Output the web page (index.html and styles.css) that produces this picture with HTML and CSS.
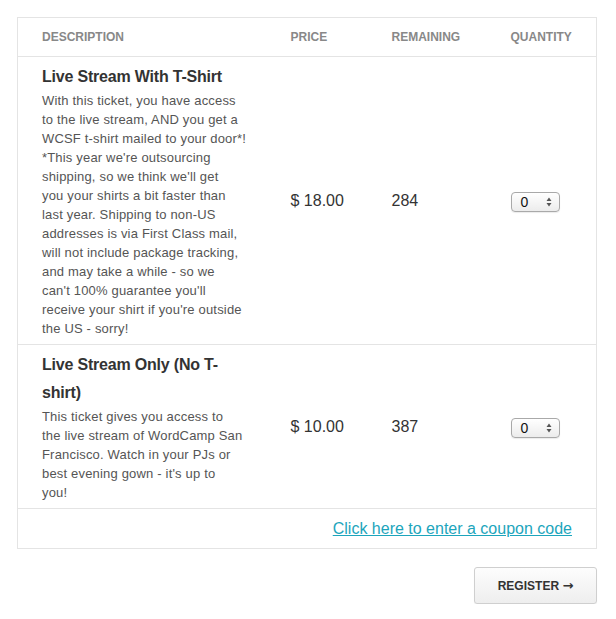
FILE: index.html
```html
<!DOCTYPE html>
<html>
<head>
<meta charset="utf-8">
<link rel="stylesheet" href="styles.css">
</head>
<body>
<div class="wrap">
  <table class="tickets">
    <colgroup>
      <col class="c-desc"><col class="c-price"><col class="c-rem"><col class="c-qty">
    </colgroup>
    <thead>
      <tr>
        <th>Description</th>
        <th>Price</th>
        <th>Remaining</th>
        <th>Quantity</th>
      </tr>
    </thead>
    <tbody>
      <tr>
        <td class="desc">
          <div class="title">Live Stream With T-Shirt</div>
          <div class="text">With this ticket, you have access<br>to the live stream, AND you get a<br>WCSF t-shirt mailed to your door*!<br>*This year we're outsourcing<br>shipping, so we think we'll get<br>you your shirts a bit faster than<br>last year. Shipping to non-US<br>addresses is via First Class mail,<br>will not include package tracking,<br>and may take a while - so we<br>can't 100% guarantee you'll<br>receive your shirt if you're outside<br>the US - sorry!</div>
        </td>
        <td class="num">$ 18.00</td>
        <td class="num">284</td>
        <td class="qty">
          <span class="select"><span class="val">0</span><svg class="arrows" width="6" height="10" viewBox="0 0 6 10"><path d="M3 0.5 L5.5 4 L0.5 4 Z M3 9.5 L5.5 6 L0.5 6 Z" fill="#555"/></svg></span>
        </td>
      </tr>
      <tr>
        <td class="desc">
          <div class="title">Live Stream Only (No T-shirt)</div>
          <div class="text">This ticket gives you access to<br>the live stream of WordCamp San<br>Francisco. Watch in your PJs or<br>best evening gown - it's up to<br>you!</div>
        </td>
        <td class="num">$ 10.00</td>
        <td class="num">387</td>
        <td class="qty">
          <span class="select"><span class="val">0</span><svg class="arrows" width="6" height="10" viewBox="0 0 6 10"><path d="M3 0.5 L5.5 4 L0.5 4 Z M3 9.5 L5.5 6 L0.5 6 Z" fill="#555"/></svg></span>
        </td>
      </tr>
      <tr>
        <td class="coupon" colspan="4"><a href="#">Click here to enter a coupon code</a></td>
      </tr>
    </tbody>
  </table>
  <div class="actions">
    <button class="register">REGISTER <span class="arrow">&rarr;</span></button>
  </div>
</div>
</body>
</html>
```

FILE: styles.css
```css
html, body {
  margin: 0;
  padding: 0;
  background: #fff;
}
body {
  font-family: "Liberation Sans", Arial, Helvetica, sans-serif;
  color: #333;
}
.wrap {
  width: 580px;
  margin: 17px 0 0 17px;
}
.tickets {
  width: 580px;
  border-collapse: collapse;
  table-layout: fixed;
  border: 1px solid #e4e4e4;
}
.c-desc { width: 249px; }
.c-price { width: 101px; }
.c-rem { width: 119px; }
.c-qty { width: 110px; }
.tickets th {
  text-align: left;
  font-size: 12px;
  font-weight: bold;
  text-transform: uppercase;
  color: #888;
  height: 38px;
  padding: 0 0 0 24px;
  border-bottom: 1px solid #e4e4e4;
  vertical-align: middle;
}
.tickets td {
  border-bottom: 1px solid #e4e4e4;
  padding: 6px 0 6px 24px;
  vertical-align: middle;
}
.tickets td.desc {
  padding-right: 18px;
}
.title {
  font-size: 16px;
  font-weight: bold;
  line-height: 28px;
  letter-spacing: -0.2px;
  color: #333;
  max-width: 201px;
}
.text {
  font-size: 13px;
  line-height: 19px;
  letter-spacing: 0.18px;
  color: #555;
  white-space: nowrap;
}
.num {
  font-size: 16px;
  color: #333;
}
.select {
  display: inline-flex;
  align-items: center;
  justify-content: space-between;
  box-sizing: border-box;
  width: 49px;
  height: 20px;
  padding: 0 7px 0 9px;
  border: 1px solid #a9a9a9;
  border-radius: 4px;
  background: linear-gradient(#ffffff, #ececec);
  box-shadow: 0 1px 1px rgba(0,0,0,0.08);
  font-size: 14px;
  color: #111;
  margin-top: 2px;
}
.tickets td.coupon {
  text-align: right;
  height: 27px;
  padding: 6px 24px 6px 0;
  border-bottom: none;
}
.coupon a {
  font-size: 16px;
  color: #1ca5bc;
  text-decoration: underline;
}
.actions {
  display: flex;
  justify-content: flex-end;
  margin-top: 18px;
}
.register {
  width: 123px;
  height: 37px;
  border: 1px solid #cfcfcf;
  border-radius: 3px;
  background: linear-gradient(#fdfdfd, #eeeeee);
  box-shadow: 0 1px 1px rgba(0,0,0,0.06);
  font-family: "Liberation Sans", Arial, sans-serif;
  font-size: 12px;
  font-weight: bold;
  color: #333;
  padding: 0;
}
.register .arrow {
  font-family: "DejaVu Sans", sans-serif;
  font-size: 13px;
}
```
